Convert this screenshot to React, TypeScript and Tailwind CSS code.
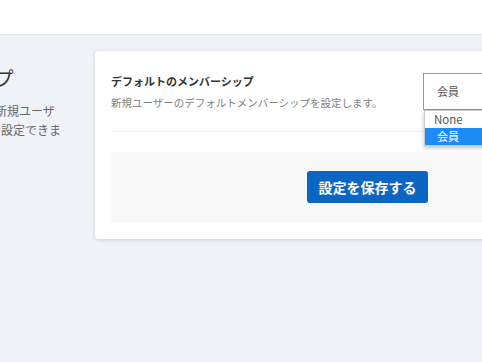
import React from 'react';

const font = { fontFamily: '"Noto Sans CJK JP", "Noto Sans", sans-serif' };

const MembershipSelect: React.FC = () => {
    return (
        <div className="relative w-[201px] shrink-0">
            <div className="h-[37px] border border-[#7f9cc0] bg-white flex items-center pl-[13px] text-[11px] text-[#555]">
                会員
            </div>
            {/* opened native list */}
            <div className="absolute left-[1px] top-full w-full bg-white border border-[#c9c9c9] shadow-[0_2px_4px_rgba(0,0,0,0.25)] text-[11.5px] z-10">
                <div className="h-[17px] flex items-center pl-[9px] text-[#555]">None</div>
                <div className="h-[17px] flex items-center pl-[12px] bg-[#1e8cf5] text-white text-[11px]">会員</div>
            </div>
        </div>
    );
};

export default function App() {
    return (
        <div className="h-screen w-full overflow-hidden bg-[#eff2f7]" style={font}>
            {/* Header */}
            <div className="h-[35px] bg-white border-b border-[#e2e6ec]" />

            <div className="flex gap-[34px] pt-[16px]">
                {/* Left description column */}
                <div className="w-[180px] shrink-0 -ml-[119px] pt-[13px]">
                    <h2 className="text-[19px] leading-[28px] text-[#2f2f2f] whitespace-nowrap">メンバーシップ</h2>
                    <p className="mt-[9px] text-[12px] leading-[19px] text-[#666] whitespace-nowrap">
                        <span className="block pl-[6px]">この設定は登録時の新規ユーザ</span>
                        <span className="block">ーに付与され、ここで設定できま</span>
                        <span className="block">す。</span>
                    </p>
                </div>

                {/* Settings card */}
                <div className="w-[545px] shrink-0 bg-white rounded-[4px] shadow-[0_1px_4px_rgba(0,0,0,0.14)] px-[16px] pt-[22px] pb-[17px]">
                    <div className="flex items-start justify-between">
                        <div>
                            <div className="text-[11px] leading-[16px] font-bold text-[#333]">デフォルトのメンバーシップ</div>
                            <div className="mt-[6px] text-[10.5px] leading-[16px] text-[#808080]">新規ユーザーのデフォルトメンバーシップを設定します。</div>
                        </div>
                        <MembershipSelect />
                    </div>

                    <div className="mt-[20px] border-t border-[#f0f0f0]" />

                    <div className="mt-[20px] bg-[#f8f8f8] py-[19px] flex justify-center">
                        <button className="h-[32px] w-[121px] rounded-[3px] bg-[#0b66c3] text-white text-[14px] font-bold">
                            設定を保存する
                        </button>
                    </div>
                </div>
            </div>
        </div>
    );
}
